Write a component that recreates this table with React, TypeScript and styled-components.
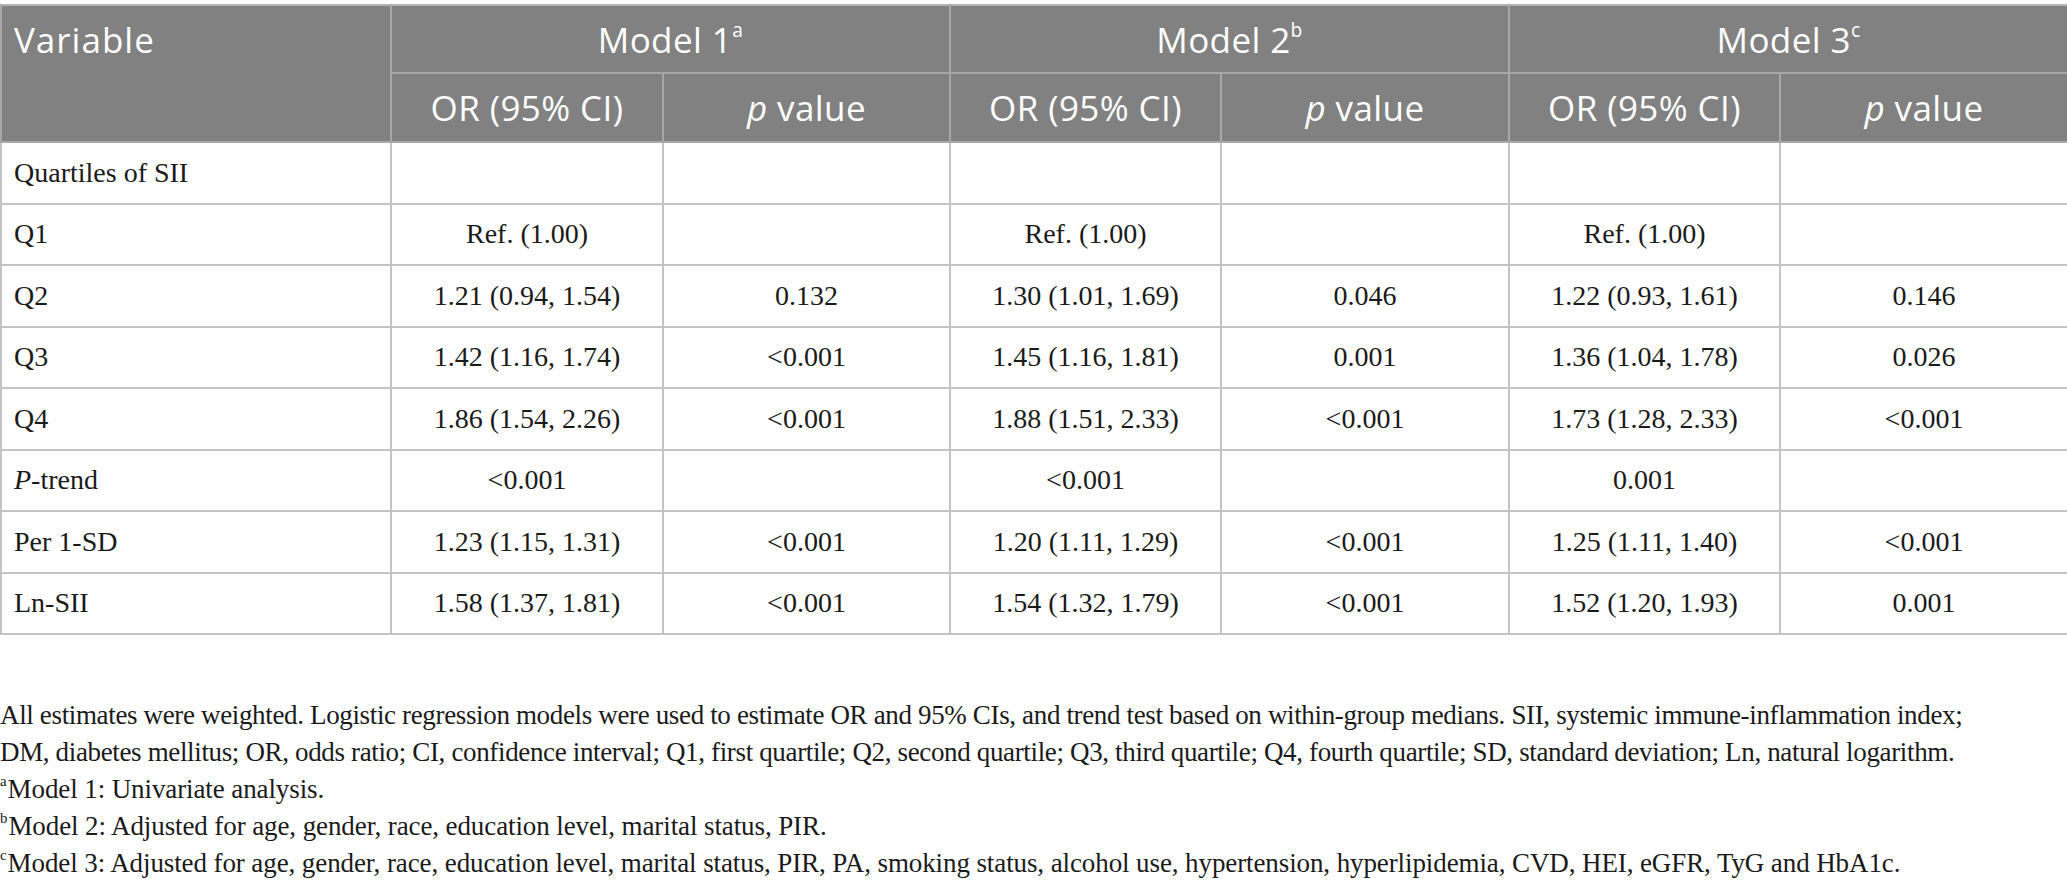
import React from "react";
import styled, { createGlobalStyle } from "styled-components";

const GlobalStyle = createGlobalStyle`
  html, body { margin: 0; padding: 0; background: #ffffff; }
  body { width: 2067px; overflow: hidden; }
`;

const Page = styled.div`
  padding-top: 4px;
  width: 2067px;
`;

const Table = styled.table`
  width: 2067px;
  border-collapse: collapse;
  table-layout: fixed;
  border-top: 2px solid #b5b5b5;
`;

const HeadCell = styled.th<{ $left?: boolean; $h?: number }>`
  background: #808180;
  color: #ffffff;
  font-family: "Open Sans", "Noto Sans", sans-serif;
  font-weight: 400;
  font-size: 35px;
  letter-spacing: 0.4px;
  height: ${(p) => p.$h ?? 68}px;
  padding: 0 ${(p) => (p.$left ? "12px" : "0")};
  text-align: ${(p) => (p.$left ? "left" : "center")};
  vertical-align: ${(p) => (p.$left ? "top" : "middle")};
  border: 2px solid #a6a7a6;
  border-top: none;
  line-height: 1;
  box-sizing: border-box;
`;

const VarLabel = styled.div`
  height: 66px;
  display: flex;
  align-items: center;
  letter-spacing: 1px;
`;

const Sup = styled.sup`
  font-size: 0.55em;
  vertical-align: top;
  position: relative;
  top: -0.1em;
`;

const Ital = styled.i`
  font-style: italic;
`;

const Cell = styled.td<{ $left?: boolean }>`
  font-family: "Liberation Serif", "Times New Roman", serif;
  font-size: 28px;
  color: #1a1a1a;
  height: 61.5px;
  padding: 0 ${(p) => (p.$left ? "12px" : "0")};
  text-align: ${(p) => (p.$left ? "left" : "center")};
  vertical-align: middle;
  border: 2px solid #c4c4c4;
  box-sizing: border-box;
`;

const Notes = styled.div`
  padding-top: 62px;
  font-family: "Liberation Serif", "Times New Roman", serif;
  font-size: 27px;
  color: #1a1a1a;
  line-height: 37px;
`;

const Note = styled.p<{ $spacing: number }>`
  margin: 0;
  letter-spacing: ${(p) => p.$spacing}px;
`;

const NoteSup = styled.sup`
  font-size: 0.55em;
  line-height: 1;
  vertical-align: top;
  position: relative;
  top: 0.2em;
  letter-spacing: 0;
  margin-right: 1px;
`;

type Row = { label: React.ReactNode; v: string[] };

const rows: Row[] = [
  { label: "Quartiles of SII", v: ["", "", "", "", "", ""] },
  { label: "Q1", v: ["Ref. (1.00)", "", "Ref. (1.00)", "", "Ref. (1.00)", ""] },
  { label: "Q2", v: ["1.21 (0.94, 1.54)", "0.132", "1.30 (1.01, 1.69)", "0.046", "1.22 (0.93, 1.61)", "0.146"] },
  { label: "Q3", v: ["1.42 (1.16, 1.74)", "<0.001", "1.45 (1.16, 1.81)", "0.001", "1.36 (1.04, 1.78)", "0.026"] },
  { label: "Q4", v: ["1.86 (1.54, 2.26)", "<0.001", "1.88 (1.51, 2.33)", "<0.001", "1.73 (1.28, 2.33)", "<0.001"] },
  { label: <><Ital>P</Ital>-trend</>, v: ["<0.001", "", "<0.001", "", "0.001", ""] },
  { label: "Per 1-SD", v: ["1.23 (1.15, 1.31)", "<0.001", "1.20 (1.11, 1.29)", "<0.001", "1.25 (1.11, 1.40)", "<0.001"] },
  { label: "Ln-SII", v: ["1.58 (1.37, 1.81)", "<0.001", "1.54 (1.32, 1.79)", "<0.001", "1.52 (1.20, 1.93)", "0.001"] },
];

const colWidths = [390, 272, 287, 271, 288, 271, 288];
const models = [
  { name: "Model 1", sup: "a" },
  { name: "Model 2", sup: "b" },
  { name: "Model 3", sup: "c" },
];

export default function App() {
  return (
    <>
      <GlobalStyle />
      <Page>
        <Table>
          <colgroup>
            {colWidths.map((w, i) => (
              <col key={i} style={{ width: w }} />
            ))}
          </colgroup>
          <thead>
            <tr>
              <HeadCell $left rowSpan={2} $h={137}>
                <VarLabel>Variable</VarLabel>
              </HeadCell>
              {models.map((m) => (
                <HeadCell key={m.name} colSpan={2} $h={68}>
                  {m.name}
                  <Sup>{m.sup}</Sup>
                </HeadCell>
              ))}
            </tr>
            <tr>
              {models.map((m) => (
                <React.Fragment key={m.name}>
                  <HeadCell $h={69}>OR (95% CI)</HeadCell>
                  <HeadCell $h={69}>
                    <Ital>p</Ital> value
                  </HeadCell>
                </React.Fragment>
              ))}
            </tr>
          </thead>
          <tbody>
            {rows.map((r, i) => (
              <tr key={i}>
                <Cell $left>{r.label}</Cell>
                {r.v.map((v, j) => (
                  <Cell key={j}>{v}</Cell>
                ))}
              </tr>
            ))}
          </tbody>
        </Table>
        <Notes>
          <Note $spacing={-0.35}>
            All estimates were weighted. Logistic regression models were used to estimate OR and 95% CIs, and trend test based on within-group medians. SII, systemic immune-inflammation index;
            <br />
            DM, diabetes mellitus; OR, odds ratio; CI, confidence interval; Q1, first quartile; Q2, second quartile; Q3, third quartile; Q4, fourth quartile; SD, standard deviation; Ln, natural logarithm.
          </Note>
          <Note $spacing={-0.1}>
            <NoteSup>a</NoteSup>Model 1: Univariate analysis.
          </Note>
          <Note $spacing={-0.1}>
            <NoteSup>b</NoteSup>Model 2: Adjusted for age, gender, race, education level, marital status, PIR.
          </Note>
          <Note $spacing={-0.1}>
            <NoteSup>c</NoteSup>Model 3: Adjusted for age, gender, race, education level, marital status, PIR, PA, smoking status, alcohol use, hypertension, hyperlipidemia, CVD, HEI, eGFR, TyG and HbA1c.
          </Note>
        </Notes>
      </Page>
    </>
  );
}
